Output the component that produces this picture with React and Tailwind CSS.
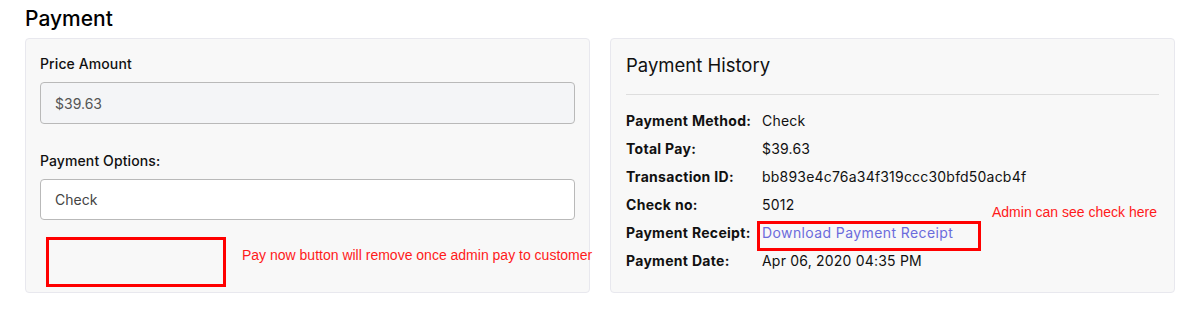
export default function App() {
  const rows = [
    { label: 'Payment Method:', value: 'Check' },
    { label: 'Total Pay:', value: '$39.63' },
    { label: 'Transaction ID:', value: 'bb893e4c76a34f319ccc30bfd50acb4f' },
    { label: 'Check no:', value: '5012' },
    { label: 'Payment Receipt:', link: 'Download Payment Receipt' },
    { label: 'Payment Date:', value: 'Apr 06, 2020 04:35 PM' },
  ];

  return (
    <div className="w-[1204px] h-[319px] bg-white pl-[25px] pt-[5px] font-['Inter',sans-serif] text-[#111]">
      <h2 className="text-[21px] leading-[28px] font-medium text-black">Payment</h2>
      <div className="mt-[5px] flex gap-[20px]">
        {/* left card */}
        <div className="w-[565px] h-[255px] bg-[#f8f8f8] border border-[#e8e8ee] rounded-[4px] px-[14px] pt-[15px]">
          <div className="text-[14px] leading-[19px] font-medium tracking-[0.1px]">Price Amount</div>
          <div className="mt-[9px] h-[42px] w-[535px] rounded-[4px] border border-[#b9b9b9] bg-[#f4f5f7] flex items-center px-[14px] text-[14px] text-[#555]">
            $39.63
          </div>
          <div className="mt-[27px] text-[14px] leading-[19px] font-medium tracking-[0.1px]">Payment Options:</div>
          <div className="mt-[9px] h-[41px] w-[535px] rounded-[4px] border border-[#b9b9b9] bg-white flex items-center px-[14px] text-[14px] text-[#444]">
            Check
          </div>
          <div className="mt-[17px] flex items-start">
            <div className="ml-[6px] w-[180px] h-[50px] shrink-0 border-[3px] border-[#ff0000]" />
            <span className="ml-[16px] mt-[8px] font-['Liberation_Sans',sans-serif] text-[14px] text-[#ff1a1a] whitespace-nowrap">
              Pay now button will remove once admin pay to customer
            </span>
          </div>
        </div>

        {/* right card */}
        <div className="w-[565px] h-[255px] bg-[#f8f8f8] border border-[#e8e8ee] rounded-[4px] px-[15px] pt-[13px]">
          <h3 className="text-[18.5px] leading-[26px]">Payment History</h3>
          <div className="mt-[16px] h-px bg-[#dedede] w-[533px]" />
          <div className="mt-[11px] flex flex-col">
            {rows.map((r) => (
              <div key={r.label} className="flex items-center h-[28px] text-[14px]">
                <span className="w-[136px] font-bold tracking-[0.3px]">{r.label}</span>
                {r.link ? (
                  <span className="relative">
                    <a href="#" className="text-[#6b6bdc] tracking-[0.4px]">{r.link}</a>
                    <span className="absolute -left-[5px] -top-[1px] w-[224px] h-[30px] border-[3px] border-[#ff0000]" />
                    <span className="absolute left-[230px] -top-[20px] font-['Liberation_Sans',sans-serif] text-[14px] text-[#ff1a1a] whitespace-nowrap">
                      Admin can see check here
                    </span>
                  </span>
                ) : (
                  <span className="tracking-[0.2px]">{r.value}</span>
                )}
              </div>
            ))}
          </div>
        </div>
      </div>
    </div>
  );
}
